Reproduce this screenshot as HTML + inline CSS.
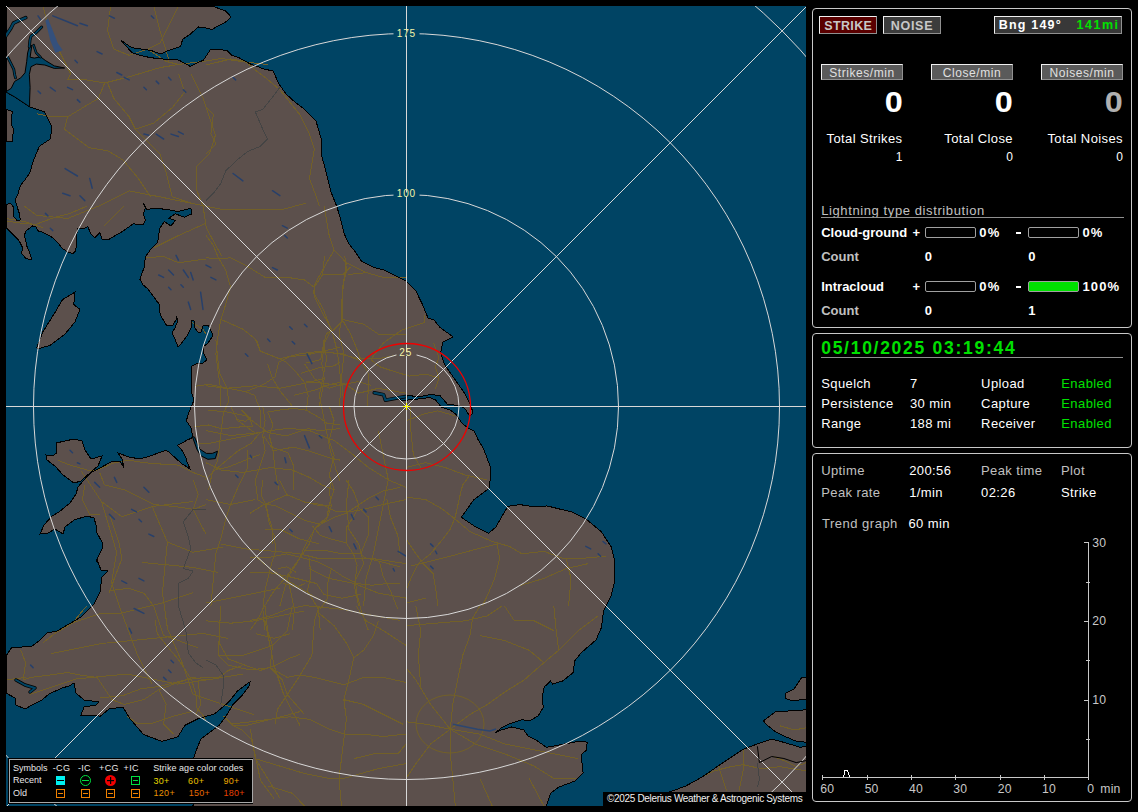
<!DOCTYPE html>
<html><head><meta charset="utf-8">
<style>
*{margin:0;padding:0;box-sizing:border-box}
html,body{width:1138px;height:812px;background:#000;overflow:hidden;font-family:"Liberation Sans",sans-serif;color:#fff}
#map{position:absolute;left:0;top:0;width:812px;height:812px}
.ab{position:absolute;white-space:nowrap}
.panel{position:absolute;left:812px;width:320px;border:1px solid #c8c8c8;border-radius:4px}
</style></head><body>
<svg id="map" width="812" height="812" viewBox="0 0 812 812">
<defs><clipPath id="mc"><rect x="6" y="6" width="800" height="800"/></clipPath></defs><g clip-path="url(#mc)">
<rect x="6" y="6" width="800" height="800" fill="#004464"/>
<polygon points="6.0,6.0 212.0,6.0 225.6,10.9 231.2,17.0 225.6,22.0 212.0,29.4 206.0,28.0 198.6,26.9 190.0,34.3 182.6,39.2 180.7,46.6 169.0,50.3 160.4,54.0 150.6,50.3 140.8,49.0 132.0,47.8 121.0,40.4 132.0,52.7 139.5,55.2 150.6,57.7 161.7,58.9 178.9,60.1 190.0,66.3 203.5,60.1 210.9,49.0 226.9,50.3 231.8,55.2 239.0,57.7 250.0,63.8 264.0,69.0 273.0,71.0 279.0,84.0 286.0,94.0 296.0,103.0 303.0,108.0 316.0,121.0 321.0,138.0 321.0,153.0 326.0,172.0 331.0,192.0 337.0,207.0 340.6,219.4 344.3,234.0 349.0,244.0 355.0,251.4 361.6,261.3 374.0,267.4 383.7,270.0 393.6,274.8 406.0,281.0 415.8,290.8 423.0,305.6 428.0,318.0 434.0,320.0 439.9,327.4 453.2,337.0 442.9,342.2 440.6,352.5 444.3,364.3 454.7,379.1 465.0,393.9 470.9,405.7 473.1,413.1 469.5,416.0 465.0,408.7 459.1,405.7 447.3,404.2 439.9,395.4 429.6,394.6 419.2,396.8 407.4,395.4 400.0,396.8 400.0,400.5 411.8,399.8 429.6,397.6 435.5,399.8 441.4,407.2 450.2,410.1 456.2,414.6 462.1,423.4 468.0,427.9 473.9,430.8 478.3,440.0 483.4,448.4 490.8,468.0 489.6,487.8 473.6,500.0 461.3,517.3 476.0,527.2 488.4,533.3 495.8,527.2 505.6,510.0 508.0,506.3 520.0,504.6 534.8,507.0 547.0,505.9 571.7,512.0 586.5,519.4 601.3,531.7 611.0,546.5 614.8,561.3 614.8,581.0 611.0,595.8 603.7,610.5 601.3,627.8 596.0,640.0 581.6,652.4 575.0,660.4 573.0,672.7 562.7,681.0 552.5,684.0 550.4,681.0 544.3,687.0 542.2,697.3 543.3,707.5 538.2,715.7 530.0,720.8 521.8,719.8 509.5,723.8 501.3,728.0 495.2,733.0 501.3,730.0 511.6,727.0 523.8,730.0 528.0,736.0 536.0,740.0 542.2,744.3 546.3,747.4 562.7,744.3 579.0,741.2 587.2,742.2 586.2,750.4 581.1,754.5 583.1,773.0 575.0,781.0 558.6,787.2 550.4,793.4 546.3,806.0 193.0,806.0 193.9,757.5 196.2,750.6 200.8,739.1 219.1,725.4 226.0,716.2 232.9,704.8 242.0,695.6 248.9,686.4 250.0,682.0 246.6,684.1 237.5,691.0 228.3,702.5 214.5,713.9 198.5,718.5 184.8,725.4 177.9,736.8 161.9,741.4 143.5,734.5 129.8,718.5 122.9,707.0 109.0,709.0 100.0,716.5 96.0,715.0 81.0,715.0 84.0,707.0 96.0,705.0 99.0,702.0 84.0,700.0 76.0,693.0 74.0,683.0 69.0,686.0 62.0,688.0 49.0,694.0 42.0,700.0 32.0,705.0 25.0,709.0 16.0,705.0 15.0,698.0 6.0,693.0 6.0,656.0 12.0,647.0 22.0,647.0 32.0,646.0 39.0,641.0 47.0,633.0 57.0,631.0 69.0,624.0 81.0,617.0 94.0,604.0 100.0,592.0 102.0,577.0 108.0,571.0 101.0,570.0 97.0,560.0 96.0,562.0 98.0,557.0 102.0,549.0 103.0,544.0 96.0,531.0 96.0,525.0 94.0,518.0 87.0,516.0 74.0,520.0 65.0,527.0 63.0,534.0 55.0,529.0 48.0,533.0 40.0,534.0 44.0,525.0 52.0,516.0 59.0,512.0 70.0,503.0 76.0,494.0 78.0,487.0 83.0,481.0 92.0,472.0 100.0,468.0 111.0,462.0 120.0,461.0 124.0,468.0 122.0,459.0 118.0,453.0 129.0,457.0 140.0,459.0 150.0,456.0 165.0,450.5 168.0,451.2 176.1,458.6 182.0,463.8 190.1,469.0 187.2,462.3 185.7,457.1 182.7,451.2 177.6,445.3 187.2,440.1 193.1,437.2 192.3,434.2 190.9,427.6 186.4,420.9 187.9,415.0 194.0,400.0 192.0,394.0 191.0,386.0 191.0,374.0 192.0,366.0 196.0,364.0 203.0,363.0 207.0,360.0 204.0,354.0 203.0,347.0 208.0,343.0 212.0,337.0 212.0,333.0 208.0,325.0 203.0,326.0 201.0,332.0 198.0,332.0 194.0,327.0 194.0,321.0 192.0,320.0 191.0,328.0 187.0,336.0 181.0,344.0 178.0,347.0 175.0,339.0 172.0,333.0 175.0,328.0 178.0,320.0 176.0,316.0 176.0,320.0 173.0,325.0 167.0,326.0 162.0,318.0 159.0,311.0 159.0,304.0 156.0,300.0 148.0,289.0 143.2,285.0 139.9,279.2 144.3,267.0 145.4,257.0 149.9,250.4 157.6,242.6 159.8,228.2 164.3,221.6 170.9,226.0 175.3,220.5 168.7,218.3 175.3,213.8 184.2,217.2 192.0,213.8 190.9,208.3 177.6,211.6 166.5,209.4 155.4,208.3 146.5,209.4 143.2,202.8 145.4,208.3 143.2,213.8 145.4,220.5 143.2,224.9 133.2,223.8 122.2,231.6 108.9,239.3 102.2,239.3 100.0,232.7 94.7,237.6 90.3,233.2 88.0,226.6 83.6,228.8 77.0,228.8 77.0,233.2 76.4,242.0 75.8,251.0 72.5,253.7 68.0,252.0 62.5,248.7 58.1,243.2 52.6,237.6 42.6,232.1 38.2,231.0 35.9,226.6 32.6,226.0 26.0,231.0 24.3,235.4 27.0,246.5 29.8,253.2 32.0,259.8 26.0,258.7 21.5,253.2 22.6,247.6 19.3,241.0 12.7,234.3 6.0,227.7 6.0,204.4 10.4,203.3 13.2,206.6 13.8,216.6 17.1,220.5 20.4,219.9 19.3,213.3 16.0,203.3 14.9,200.0 18.2,193.3 20.4,185.5 24.8,180.0 29.6,173.4 33.3,161.0 39.4,146.2 50.5,138.9 51.7,126.5 44.4,111.7 29.6,106.8 14.8,97.0 6.0,92.0" fill="#5c504c"/>
<polygon points="36.8,347.6 43.0,331.6 55.3,311.9 62.6,299.6 75.0,292.2 73.7,304.5 79.9,309.4 75.0,321.8 65.1,334.0 55.3,341.5 50.3,345.2 38.0,348.9" fill="#5c504c"/>
<polygon points="6.0,109.0 12.3,111.7 11.0,124.0 13.5,129.0 12.3,141.0 6.0,141.0" fill="#5c504c"/>
<polygon points="669.5,792.0 685.8,786.0 702.2,777.0 718.5,765.7 743.0,749.3 759.4,743.2 771.7,739.0 779.8,741.2 790.0,744.2 800.3,747.3 806.0,746.3 806.0,806.0 669.5,806.0" fill="#5c504c"/>
<polygon points="763.5,720.7 775.8,711.5 800.3,710.5 806.0,709.5 806.0,742.2 796.2,741.2 784.0,736.0 775.8,732.0 765.5,723.8" fill="#5c504c"/>
<polygon points="786.0,693.0 794.0,689.0 802.0,677.0 806.0,677.0 806.0,699.0 792.0,701.0 785.0,698.0" fill="#5c504c"/>
<polygon points="56.0,443.0 74.0,439.0 82.0,441.0 85.0,450.0 91.0,459.0 102.0,456.0 98.0,466.0 91.0,472.0 81.0,481.0 74.0,483.0 63.0,475.0 55.0,466.0 47.0,460.0 46.0,455.0 52.0,456.0 57.0,453.0" fill="#5c504c"/>
<g fill="none" stroke="#726028" stroke-width="1" stroke-linejoin="round" shape-rendering="crispEdges"><polyline points="67.6,79.9 86.1,79.9 104.6,83.0 129.2,76.8 160.0,67.6 178.5,64.5 203.1,61.4 221.6,58.4 240.1,61.4 267.8,64.5"/><polyline points="43.0,6.0 49.1,30.6 61.4,55.3 70.7,73.8 67.6,79.9"/><polyline points="110.7,6.0 107.6,30.6 113.8,49.1 129.2,55.3 147.7,49.1 160.0,43.0 178.5,6.0"/><polyline points="153.8,6.0 160.0,30.6 169.2,61.4"/><polyline points="104.6,83.0 98.4,98.4 83.0,107.6 67.6,116.9 52.2,116.9"/><polyline points="67.6,116.9 64.5,129.2 76.8,138.4 89.2,147.7 107.6,150.7 123.0,160.0 138.4,178.5 150.7,196.9"/><polyline points="107.6,83.0 113.8,98.4 129.2,116.9 135.4,129.2 160.0,153.8 166.1,172.3 172.3,196.9 190.8,203.1"/><polyline points="178.5,73.8 184.6,92.2 172.3,107.6 153.8,123.0 135.4,129.2"/><polyline points="190.8,73.8 203.1,98.4 209.3,116.9 215.4,135.4 209.3,153.8 196.9,166.1 196.9,190.8 203.1,206.2"/><polyline points="36.8,113.8 52.2,116.9"/><polyline points="24.5,206.2 36.8,215.4 67.6,218.5 98.4,206.2 129.2,190.8 160.0,196.9 190.8,203.1 221.6,209.3 252.4,209.3 283.2,209.3 306.0,203.1"/><polyline points="203.1,206.2 206.2,227.7 221.6,256.1"/><polyline points="6.0,218.5 24.5,221.6 43.0,227.7"/><polyline points="147.7,49.1 166.1,61.4 178.5,64.5"/><polyline points="206.0,65.1 230.6,59.0 245.4,61.4 255.3,70.0 265.1,77.4 279.9,89.7 299.6,114.4 309.4,134.1 314.4,148.9 311.9,163.6 309.4,178.4 316.8,198.1 319.3,206.0"/><polyline points="206.0,107.0 213.4,114.4 210.9,134.1 215.9,143.9 206.0,153.8"/><polyline points="6.0,220.8 20.8,223.2 35.6,224.5 55.3,217.1 70.0,213.4 87.3,206.0"/><polyline points="104.5,225.7 114.4,215.9 124.2,206.0"/><polyline points="146.4,257.7 163.6,256.5 178.4,262.7 206.0,259.0"/><polyline points="153.8,247.9 178.4,235.6 206.0,223.2"/><polyline points="190.7,321.8 203.0,329.2 206.0,334.1"/><polyline points="324.2,206.0 326.7,220.8 329.2,235.6 334.1,250.3 326.7,262.7 314.4,284.8 314.4,297.1 321.8,311.9 331.6,329.2 324.2,343.9 321.8,363.6 324.2,378.4 321.8,393.2 319.3,406.0"/><polyline points="334.1,250.3 346.4,262.7 343.9,279.9 341.5,304.5 341.5,319.3 339.0,334.1 343.9,353.8 341.5,378.4 343.9,406.0"/><polyline points="206.0,257.7 218.3,259.0 230.6,257.7 245.4,265.1 265.1,277.4 287.3,277.4 304.5,279.9 314.4,287.3"/><polyline points="206.0,235.6 213.4,245.4 218.3,257.7 225.7,270.0 230.6,287.3 225.7,304.5 220.8,319.3 218.3,334.1 215.9,353.8 218.3,373.5 220.8,390.7 220.8,406.0"/><polyline points="220.8,319.3 242.9,329.2 255.3,339.0 260.2,351.3 279.9,358.7 299.6,353.8 319.3,351.3 339.0,353.8 358.7,358.7 378.4,358.7 403.0,353.8"/><polyline points="267.6,363.6 272.5,378.4 279.9,390.7 292.2,406.0"/><polyline points="206.0,385.8 225.7,388.3 255.3,385.8 279.9,388.3 304.5,383.3 324.2,378.4"/><polyline points="346.4,262.7 366.1,272.5 383.3,277.4 406.0,277.4"/><polyline points="341.5,319.3 363.6,324.2 378.4,334.1 406.0,334.1"/><polyline points="304.5,363.6 314.4,378.4 329.2,388.3 343.9,383.3 358.7,393.2 378.4,388.3 406.0,393.2"/><polyline points="206.0,430.6 230.6,435.6 255.3,433.1 270.0,430.6 289.7,428.2 309.4,430.6 334.1,440.5 353.8,455.3 368.6,467.6 388.3,479.9 406.0,487.3"/><polyline points="262.7,406.0 265.1,420.8 262.7,435.6 265.1,450.3 255.3,479.9 257.7,499.6 265.1,504.5 272.5,529.2 272.5,543.9"/><polyline points="230.6,406.0 238.0,420.8 255.3,433.1"/><polyline points="206.0,462.7 220.8,470.0 242.9,472.5 270.0,467.6 292.2,470.0 309.4,477.4 321.8,484.8 334.1,489.7"/><polyline points="247.9,450.3 247.9,467.6 238.0,487.3 230.6,504.5 225.7,519.3 220.8,539.0 215.9,553.8 213.4,578.4 210.9,606.0"/><polyline points="265.1,504.5 287.3,494.7 304.5,502.1 321.8,504.5 336.5,511.9 348.9,511.9 363.6,509.4 383.3,504.5 406.0,499.6"/><polyline points="329.2,406.0 334.1,420.8 329.2,440.5 334.1,455.3 329.2,475.0 334.1,489.7 329.2,504.5 326.7,519.3 314.4,529.2 309.4,543.9 299.6,558.7 287.3,578.4 279.9,606.0"/><polyline points="348.9,479.9 346.4,504.5 348.9,529.2 358.7,543.9 363.6,563.6 353.8,583.3 358.7,606.0"/><polyline points="220.8,543.9 245.4,548.9 275.0,551.3 299.6,553.8 319.3,558.7 343.9,558.7 373.5,558.7 406.0,563.6"/><polyline points="255.3,556.2 270.0,568.6 292.2,583.3 316.8,598.1 334.1,606.0"/><polyline points="309.4,568.6 329.2,578.4 353.8,583.3 378.4,593.2 406.0,598.1"/><polyline points="378.4,430.6 383.3,455.3 388.3,479.9 383.3,504.5 378.4,529.2 373.5,553.8 366.1,578.4 363.6,606.0"/><polyline points="206.0,603.0 230.6,598.1 255.3,593.2 279.9,588.3"/><polyline points="265.1,529.2 279.9,529.2 299.6,539.0 319.3,543.9"/><polyline points="206.0,499.6 230.6,504.5 255.3,499.6"/><polyline points="57.7,460.2 70.0,465.1 87.3,470.0 97.1,470.0"/><polyline points="97.1,470.0 114.4,462.7 129.2,460.2 143.9,462.7 158.7,463.9 178.4,465.1 193.2,472.5 206.0,477.4"/><polyline points="99.6,472.5 104.5,484.8 124.2,489.7 139.0,497.1 153.8,504.5 178.4,507.0 193.2,509.4 206.0,504.5"/><polyline points="84.8,484.8 82.4,499.6 89.7,514.4 99.6,514.4"/><polyline points="109.4,514.4 114.4,529.2 119.3,543.9 121.8,558.7 114.4,578.4 109.4,593.2"/><polyline points="109.4,590.7 129.2,588.3 143.9,593.2 153.8,606.0"/><polyline points="193.2,479.9 198.1,494.7 193.2,509.4 200.6,524.2 206.0,534.1"/><polyline points="20.8,650.3 25.7,662.7 23.2,679.9 30.6,677.4 50.3,675.0 67.6,672.5 79.9,675.0 97.1,677.4 107.0,692.2 111.9,699.6 124.2,704.5 143.9,699.6 158.7,689.7 178.4,682.4 193.2,677.4 206.0,679.9"/><polyline points="6.0,679.9 25.7,677.4"/><polyline points="42.9,642.9 55.3,633.1 72.5,623.2 82.4,610.9 87.3,606.0"/><polyline points="153.8,606.0 158.7,620.8 163.6,635.6 178.4,640.5 198.1,647.9"/><polyline points="158.7,689.7 166.1,704.5 163.6,724.2 173.5,734.1"/><polyline points="198.1,679.9 200.6,704.5 195.7,714.4 206.0,719.3"/><polyline points="220.8,606.0 219.5,630.6 218.3,655.3 228.2,665.1 250.3,670.0 270.0,667.6 287.3,677.4 299.6,675.0 314.4,677.4 343.9,684.8 363.6,677.4 383.3,677.4 406.0,682.4"/><polyline points="265.1,606.0 267.6,630.6 272.5,645.4 270.0,667.6 282.4,679.9 287.3,694.7 304.5,714.4"/><polyline points="319.3,606.0 314.4,620.8 311.9,655.3 297.1,679.9 287.3,694.7 277.4,709.4 275.0,724.2"/><polyline points="319.3,613.4 334.1,625.7 346.4,642.9 353.8,657.7 348.9,679.9 343.9,699.6 346.4,719.3 343.9,739.0 341.5,758.7 339.0,778.4 341.5,806.0"/><polyline points="378.4,620.8 373.5,635.6 363.6,650.3 353.8,657.7"/><polyline points="230.6,724.2 250.3,721.8 270.0,719.3 289.7,716.8 309.4,719.3 329.2,729.2 343.9,734.1 363.6,734.1 383.3,736.5 406.0,734.1"/><polyline points="250.3,729.2 252.8,743.9 255.3,758.7 267.6,778.4 279.9,798.1"/><polyline points="292.2,606.0 287.3,630.6 272.5,645.4 242.9,655.3 218.3,655.3"/><polyline points="206.0,620.8 230.6,623.2 255.3,620.8 279.9,615.9 304.5,610.9"/><polyline points="255.3,758.7 279.9,766.1 304.5,773.5 329.2,778.4 343.9,778.4 378.4,768.6 406.0,763.6"/><polyline points="356.2,606.0 366.1,620.8 383.3,630.6 406.0,645.4"/><polyline points="343.9,699.6 363.6,704.5 383.3,714.4 403.0,724.2"/><polyline points="353.8,758.7 373.5,753.8 398.1,753.8 406.0,743.9"/><polyline points="267.6,785.8 292.2,793.2 304.5,806.0"/><polyline points="406.0,420.8 425.7,413.4 438.0,410.9 455.3,415.9"/><polyline points="410.9,406.0 410.9,430.6 413.4,455.3 420.8,467.6"/><polyline points="406.0,467.6 425.7,462.7 445.4,467.6 465.1,475.0 487.3,479.9"/><polyline points="470.0,475.0 462.7,484.8 460.2,494.7 455.3,516.8 450.3,529.2 442.9,539.0 430.6,553.8 418.3,563.6 410.9,578.4 406.0,590.7"/><polyline points="406.0,497.1 425.7,499.6 442.9,509.4 455.3,519.3 470.0,531.6 492.2,541.5 509.4,546.4 521.8,553.8 543.9,551.3 563.6,558.7 578.4,558.7 606.0,556.2"/><polyline points="406.0,539.0 415.9,553.8 423.2,563.6 433.1,573.5 435.6,588.3 438.0,606.0"/><polyline points="410.9,566.1 430.6,561.2 450.3,556.2 477.4,548.9 497.1,543.9"/><polyline points="497.1,543.9 499.6,558.7 494.7,578.4 487.3,595.7 482.4,606.0"/><polyline points="566.1,558.7 571.0,578.4 568.6,606.0"/><polyline points="519.3,585.8 543.9,578.4 566.1,568.6 588.3,563.6"/><polyline points="406.0,603.0 425.7,598.1"/><polyline points="450.3,729.2 452.8,704.5 457.7,679.9 462.7,655.3 470.0,635.6 472.5,618.3 479.9,606.0"/><polyline points="450.3,729.2 470.0,714.4 487.3,704.5 504.5,692.2 524.2,679.9 543.9,662.7 558.7,650.3 578.4,630.6 598.1,615.9"/><polyline points="450.3,729.2 479.9,734.1 504.5,743.9 529.2,748.9 553.8,753.8 578.4,758.7"/><polyline points="450.3,729.2 475.0,743.9 504.5,753.8 534.1,766.1 553.8,778.4 576.0,778.4"/><polyline points="450.3,729.2 450.3,753.8 452.8,778.4 455.3,806.0"/><polyline points="450.3,729.2 430.6,743.9 415.9,763.6 406.0,778.4"/><polyline points="450.3,729.2 425.7,724.2 406.0,721.8"/><polyline points="450.3,729.2 430.6,704.5 415.9,679.9 406.0,667.6"/><polyline points="406.0,625.7 435.6,623.2 465.1,620.8 487.3,615.9 502.1,606.0"/><polyline points="479.9,635.6 504.5,640.5 529.2,650.3 543.9,662.7"/><polyline points="415.9,606.0 420.8,630.6 418.3,655.3 420.8,687.3"/><polyline points="553.8,606.0 556.2,630.6 558.7,650.3"/><polyline points="504.5,606.0 514.4,620.8 534.1,620.8 553.8,630.6"/><polyline points="479.9,778.4 492.2,806.0"/><polyline points="529.2,778.4 543.9,806.0"/><polyline points="324.5,256.0 322.6,274.5 315.2,285.6 313.4,292.9 322.6,307.7 330.0,326.2 333.7,337.3 337.4,352.1 339.3,366.8 341.1,385.3 339.3,406.0"/><polyline points="344.8,256.0 346.6,270.8 342.9,285.6 342.9,304.0 342.9,320.7 350.3,333.6 355.9,346.5 361.4,361.3 368.8,374.2 368.8,385.3 367.0,406.0"/><polyline points="348.5,274.5 367.0,272.6"/><polyline points="322.6,274.5 342.9,274.5 350.3,267.1"/><polyline points="342.9,320.7 333.7,329.9 326.3,333.6 322.6,348.4 320.8,359.5 306.0,363.1"/><polyline points="370.7,359.5 383.6,342.8 402.1,329.9 424.2,322.5 424.2,315.1"/><polyline points="370.7,359.5 379.9,366.8 391.0,370.5 409.5,376.1 426.1,374.2 439.0,377.9 435.3,389.0"/><polyline points="433.5,342.8 439.0,357.6 435.3,366.8 439.0,377.9"/><polyline points="306.0,353.9 324.5,352.1 342.9,353.9 361.4,361.3"/><polyline points="306.0,381.6 324.5,383.5 339.3,385.3 357.7,381.6 370.7,385.3"/><polyline points="215.9,340.0 217.7,358.5 219.6,373.3 226.9,388.0 228.8,401.0 223.3,413.9 221.4,428.7 219.6,443.5 217.7,460.1 212.2,473.0 208.5,490.0"/><polyline points="195.5,386.2 208.5,384.3 226.9,388.0 245.4,391.7 263.9,384.3 275.0,376.9 278.7,362.2 289.8,356.6 308.2,354.8 323.0,351.1 340.0,347.4"/><polyline points="256.5,340.0 260.2,351.1 278.7,358.5 286.1,362.2 297.1,373.3 304.5,382.5 308.2,395.4 306.4,410.2 319.3,417.6 326.7,423.1 340.0,425.0"/><polyline points="208.5,410.2 226.9,412.0 245.4,415.7 260.2,426.8 267.6,432.4 286.1,436.1 308.2,428.7 319.3,430.5 340.0,428.7"/><polyline points="245.4,391.7 254.7,395.4 260.2,410.2 260.2,426.8"/><polyline points="267.6,412.0 273.1,425.0 269.4,436.1 273.1,450.8 275.0,469.3 278.7,490.0"/><polyline points="260.2,432.4 251.0,443.5 238.0,450.8 226.9,460.1 215.9,469.3 204.8,480.4"/><polyline points="260.2,432.4 245.4,436.1 226.9,439.8 208.5,443.5 197.4,443.5"/><polyline points="263.9,436.1 271.3,447.1 287.9,452.7 293.5,465.6 293.5,490.0"/><polyline points="193.7,426.8 208.5,425.0 221.4,428.7 241.7,426.8 252.8,426.8"/><polyline points="293.5,395.4 300.8,393.6 315.6,389.9 330.4,384.3 340.0,382.5"/><polyline points="323.0,340.0 326.7,358.5 323.0,376.9 319.3,395.4 323.0,413.9 326.7,432.4 330.4,450.8 335.9,469.3 340.0,480.4"/><polyline points="300.8,373.3 319.3,367.7 334.1,365.9 340.0,362.2"/><polyline points="215.9,469.3 226.9,467.5 245.4,460.1 260.2,454.5"/><polyline points="306.4,410.2 293.5,408.4 278.7,410.2 267.6,412.0"/><polyline points="273.1,450.8 293.5,447.1 308.2,450.8 330.4,458.2 340.0,460.1"/><polyline points="241.7,410.2 249.1,417.6 252.8,426.8"/><polyline points="236.2,419.4 245.4,421.3 251.0,417.6"/><polyline points="250.0,513.3 264.8,504.0 275.9,505.9 290.6,513.3 305.4,520.6 320.2,524.3 335.0,516.9 346.1,513.3 357.1,505.9 368.2,498.5 383.0,491.1 400.0,487.4"/><polyline points="262.9,480.0 261.1,494.8 266.6,505.9 268.5,520.6 274.0,535.4 275.9,550.2 272.2,561.3 268.5,576.1 264.8,590.8 262.9,609.3 264.8,630.0"/><polyline points="331.3,480.0 329.4,491.1 331.3,505.9 327.6,516.9 316.5,526.2 305.4,544.7 299.9,557.6 286.9,576.1"/><polyline points="346.1,480.0 353.5,491.1 359.0,505.9 353.5,516.9 346.1,528.0 346.1,542.8 353.5,553.9 357.1,565.0 355.3,579.8 357.1,594.5 360.8,609.3 368.2,630.0"/><polyline points="357.1,505.9 368.2,516.9 368.2,535.4 360.8,553.9 364.5,557.6 379.3,561.3 400.0,566.8"/><polyline points="250.0,557.6 268.5,557.6 286.9,553.9 301.7,557.6 316.5,561.3 331.3,568.7 342.4,576.1 357.1,583.5 371.9,585.3 386.7,583.5 400.0,583.5"/><polyline points="286.9,576.1 301.7,579.8 316.5,583.5 323.9,594.5 342.4,598.2 360.8,594.5"/><polyline points="286.9,576.1 290.6,590.8 294.3,609.3 292.5,630.0"/><polyline points="286.9,576.1 274.0,590.8 264.8,605.6 257.4,620.4 250.0,630.0"/><polyline points="286.9,576.1 268.5,572.4 250.0,572.4"/><polyline points="309.1,557.6 311.0,576.1 307.3,590.8 318.4,609.3 320.2,630.0"/><polyline points="331.3,568.7 327.6,583.5 327.6,598.2 320.2,609.3"/><polyline points="379.3,561.3 383.0,576.1 390.4,590.8 397.8,609.3"/><polyline points="250.0,620.4 268.5,616.7 286.9,609.3 305.4,605.6 323.9,607.5 342.4,609.3 360.8,613.0 379.3,616.7 400.0,620.4"/><polyline points="360.8,553.9 342.4,553.9 323.9,550.2 305.4,550.2"/><polyline points="279.6,480.0 286.9,494.8 305.4,502.2 320.2,505.9 331.3,505.9"/><polyline points="312.8,526.2 320.2,535.4 331.3,539.1 346.1,542.8"/><polyline points="386.7,498.5 390.4,516.9 397.8,535.4 400.0,553.9"/><polyline points="277.7,568.7 286.9,566.8 296.2,572.4"/><polyline points="283.3,583.5 296.2,587.1 305.4,583.5"/><polyline points="702.2,776.9 714.4,770.8 730.8,766.7 743.1,764.7 761.5,768.8 779.8,766.7 806.0,770.8"/><polyline points="743.1,750.4 743.1,770.8 739.0,791.2"/><polyline points="773.7,756.5 783.9,760.6 796.2,766.7 806.0,762.6"/><polyline points="718.5,765.7 722.6,779.0 726.7,791.2"/><polyline points="779.8,725.8 794.2,729.9 806.0,727.9"/><polyline points="155.0,620.0 157.3,633.7 166.4,645.2 177.9,658.9 191.6,679.6 196.2,695.6 196.2,707.1 205.4,718.5"/><polyline points="219.1,620.0 219.1,642.9 228.3,658.9 246.6,665.8 260.4,670.4 274.1,665.8 287.9,658.9 300.0,654.4"/><polyline points="100.0,697.9 122.9,695.6 141.2,688.7 159.6,686.4 187.1,679.6 205.4,677.3 219.1,677.3 228.3,670.4 242.0,665.8"/><polyline points="264.9,620.0 269.5,642.9 274.1,665.8 283.3,693.3 292.4,711.6 300.0,725.4"/><polyline points="223.7,716.2 232.9,725.4 242.0,730.0 251.2,739.1 255.8,757.5 260.4,780.4 274.1,798.7"/><polyline points="232.9,725.4 246.6,725.4 264.9,720.8 283.3,716.2 300.0,711.6"/><polyline points="127.5,716.2 136.7,723.1 152.7,723.1 173.3,716.2 191.6,711.6"/><polyline points="255.8,633.7 274.1,638.3 290.1,633.7"/><polyline points="81.2,471.0 101.5,501.5 121.8,516.7 152.2,506.5 192.8,501.5"/><polyline points="101.5,501.5 116.7,552.2 111.6,582.6 121.8,613.1 137.0,653.7 152.2,684.1"/><polyline points="121.8,613.1 162.4,602.9 192.8,592.8"/><polyline points="50.7,653.7 101.5,643.5 152.2,638.5 202.9,633.4 228.3,638.5"/><polyline points="30.4,694.3 76.1,679.0 126.8,674.0 177.6,684.1 213.1,679.0 243.5,674.0"/><polyline points="152.2,506.5 167.4,542.1 192.8,552.2 223.2,547.1"/><polyline points="167.4,542.1 162.4,592.8 167.4,628.3 182.6,663.8 192.8,694.3"/><polyline points="192.8,694.3 223.2,704.4 253.7,714.6"/><polyline points="71.0,623.2 101.5,613.1 121.8,613.1"/><polyline points="142.1,562.4 192.8,567.4 218.2,572.5"/></g>
<ellipse cx="450" cy="724" rx="34" ry="29" fill="none" stroke="#726028" stroke-width="1"/>
<g fill="none" stroke="#444444" stroke-width="1" shape-rendering="crispEdges"><polyline points="279.9,87.3 272.5,97.1 262.7,109.4 255.3,111.9 262.7,129.2 267.6,139.0 260.2,146.4 247.9,151.3 235.6,161.2 225.7,171.0 220.8,183.3 213.4,193.2 206.0,200.6"/><polyline points="206.0,509.4 193.2,509.4 183.3,521.8 188.3,536.5 190.7,548.9 183.3,568.6 193.2,571.0 188.3,578.4 178.4,583.3 178.4,606.0"/><polyline points="178.4,606.0 185.8,630.6 188.3,652.8 195.7,662.7 203.0,667.6"/><polyline points="206.0,660.2 215.9,665.1 223.2,675.0 223.2,687.3 220.8,704.5"/><polyline points="757.4,762.6 759.4,779.0 757.4,787.1"/></g>
<polygon points="6.0,6.0 212.0,6.0 225.6,10.9 231.2,17.0 225.6,22.0 212.0,29.4 206.0,28.0 198.6,26.9 190.0,34.3 182.6,39.2 180.7,46.6 169.0,50.3 160.4,54.0 150.6,50.3 140.8,49.0 132.0,47.8 121.0,40.4 132.0,52.7 139.5,55.2 150.6,57.7 161.7,58.9 178.9,60.1 190.0,66.3 203.5,60.1 210.9,49.0 226.9,50.3 231.8,55.2 239.0,57.7 250.0,63.8 264.0,69.0 273.0,71.0 279.0,84.0 286.0,94.0 296.0,103.0 303.0,108.0 316.0,121.0 321.0,138.0 321.0,153.0 326.0,172.0 331.0,192.0 337.0,207.0 340.6,219.4 344.3,234.0 349.0,244.0 355.0,251.4 361.6,261.3 374.0,267.4 383.7,270.0 393.6,274.8 406.0,281.0 415.8,290.8 423.0,305.6 428.0,318.0 434.0,320.0 439.9,327.4 453.2,337.0 442.9,342.2 440.6,352.5 444.3,364.3 454.7,379.1 465.0,393.9 470.9,405.7 473.1,413.1 469.5,416.0 465.0,408.7 459.1,405.7 447.3,404.2 439.9,395.4 429.6,394.6 419.2,396.8 407.4,395.4 400.0,396.8 400.0,400.5 411.8,399.8 429.6,397.6 435.5,399.8 441.4,407.2 450.2,410.1 456.2,414.6 462.1,423.4 468.0,427.9 473.9,430.8 478.3,440.0 483.4,448.4 490.8,468.0 489.6,487.8 473.6,500.0 461.3,517.3 476.0,527.2 488.4,533.3 495.8,527.2 505.6,510.0 508.0,506.3 520.0,504.6 534.8,507.0 547.0,505.9 571.7,512.0 586.5,519.4 601.3,531.7 611.0,546.5 614.8,561.3 614.8,581.0 611.0,595.8 603.7,610.5 601.3,627.8 596.0,640.0 581.6,652.4 575.0,660.4 573.0,672.7 562.7,681.0 552.5,684.0 550.4,681.0 544.3,687.0 542.2,697.3 543.3,707.5 538.2,715.7 530.0,720.8 521.8,719.8 509.5,723.8 501.3,728.0 495.2,733.0 501.3,730.0 511.6,727.0 523.8,730.0 528.0,736.0 536.0,740.0 542.2,744.3 546.3,747.4 562.7,744.3 579.0,741.2 587.2,742.2 586.2,750.4 581.1,754.5 583.1,773.0 575.0,781.0 558.6,787.2 550.4,793.4 546.3,806.0 193.0,806.0 193.9,757.5 196.2,750.6 200.8,739.1 219.1,725.4 226.0,716.2 232.9,704.8 242.0,695.6 248.9,686.4 250.0,682.0 246.6,684.1 237.5,691.0 228.3,702.5 214.5,713.9 198.5,718.5 184.8,725.4 177.9,736.8 161.9,741.4 143.5,734.5 129.8,718.5 122.9,707.0 109.0,709.0 100.0,716.5 96.0,715.0 81.0,715.0 84.0,707.0 96.0,705.0 99.0,702.0 84.0,700.0 76.0,693.0 74.0,683.0 69.0,686.0 62.0,688.0 49.0,694.0 42.0,700.0 32.0,705.0 25.0,709.0 16.0,705.0 15.0,698.0 6.0,693.0 6.0,656.0 12.0,647.0 22.0,647.0 32.0,646.0 39.0,641.0 47.0,633.0 57.0,631.0 69.0,624.0 81.0,617.0 94.0,604.0 100.0,592.0 102.0,577.0 108.0,571.0 101.0,570.0 97.0,560.0 96.0,562.0 98.0,557.0 102.0,549.0 103.0,544.0 96.0,531.0 96.0,525.0 94.0,518.0 87.0,516.0 74.0,520.0 65.0,527.0 63.0,534.0 55.0,529.0 48.0,533.0 40.0,534.0 44.0,525.0 52.0,516.0 59.0,512.0 70.0,503.0 76.0,494.0 78.0,487.0 83.0,481.0 92.0,472.0 100.0,468.0 111.0,462.0 120.0,461.0 124.0,468.0 122.0,459.0 118.0,453.0 129.0,457.0 140.0,459.0 150.0,456.0 165.0,450.5 168.0,451.2 176.1,458.6 182.0,463.8 190.1,469.0 187.2,462.3 185.7,457.1 182.7,451.2 177.6,445.3 187.2,440.1 193.1,437.2 192.3,434.2 190.9,427.6 186.4,420.9 187.9,415.0 194.0,400.0 192.0,394.0 191.0,386.0 191.0,374.0 192.0,366.0 196.0,364.0 203.0,363.0 207.0,360.0 204.0,354.0 203.0,347.0 208.0,343.0 212.0,337.0 212.0,333.0 208.0,325.0 203.0,326.0 201.0,332.0 198.0,332.0 194.0,327.0 194.0,321.0 192.0,320.0 191.0,328.0 187.0,336.0 181.0,344.0 178.0,347.0 175.0,339.0 172.0,333.0 175.0,328.0 178.0,320.0 176.0,316.0 176.0,320.0 173.0,325.0 167.0,326.0 162.0,318.0 159.0,311.0 159.0,304.0 156.0,300.0 148.0,289.0 143.2,285.0 139.9,279.2 144.3,267.0 145.4,257.0 149.9,250.4 157.6,242.6 159.8,228.2 164.3,221.6 170.9,226.0 175.3,220.5 168.7,218.3 175.3,213.8 184.2,217.2 192.0,213.8 190.9,208.3 177.6,211.6 166.5,209.4 155.4,208.3 146.5,209.4 143.2,202.8 145.4,208.3 143.2,213.8 145.4,220.5 143.2,224.9 133.2,223.8 122.2,231.6 108.9,239.3 102.2,239.3 100.0,232.7 94.7,237.6 90.3,233.2 88.0,226.6 83.6,228.8 77.0,228.8 77.0,233.2 76.4,242.0 75.8,251.0 72.5,253.7 68.0,252.0 62.5,248.7 58.1,243.2 52.6,237.6 42.6,232.1 38.2,231.0 35.9,226.6 32.6,226.0 26.0,231.0 24.3,235.4 27.0,246.5 29.8,253.2 32.0,259.8 26.0,258.7 21.5,253.2 22.6,247.6 19.3,241.0 12.7,234.3 6.0,227.7 6.0,204.4 10.4,203.3 13.2,206.6 13.8,216.6 17.1,220.5 20.4,219.9 19.3,213.3 16.0,203.3 14.9,200.0 18.2,193.3 20.4,185.5 24.8,180.0 29.6,173.4 33.3,161.0 39.4,146.2 50.5,138.9 51.7,126.5 44.4,111.7 29.6,106.8 14.8,97.0 6.0,92.0" fill="none" stroke="#000" stroke-width="1" shape-rendering="crispEdges"/>
<polygon points="36.8,347.6 43.0,331.6 55.3,311.9 62.6,299.6 75.0,292.2 73.7,304.5 79.9,309.4 75.0,321.8 65.1,334.0 55.3,341.5 50.3,345.2 38.0,348.9" fill="none" stroke="#000" stroke-width="1" shape-rendering="crispEdges"/>
<polygon points="6.0,109.0 12.3,111.7 11.0,124.0 13.5,129.0 12.3,141.0 6.0,141.0" fill="none" stroke="#000" stroke-width="1" shape-rendering="crispEdges"/>
<polygon points="669.5,792.0 685.8,786.0 702.2,777.0 718.5,765.7 743.0,749.3 759.4,743.2 771.7,739.0 779.8,741.2 790.0,744.2 800.3,747.3 806.0,746.3 806.0,806.0 669.5,806.0" fill="none" stroke="#000" stroke-width="1" shape-rendering="crispEdges"/>
<polygon points="763.5,720.7 775.8,711.5 800.3,710.5 806.0,709.5 806.0,742.2 796.2,741.2 784.0,736.0 775.8,732.0 765.5,723.8" fill="none" stroke="#000" stroke-width="1" shape-rendering="crispEdges"/>
<polygon points="786.0,693.0 794.0,689.0 802.0,677.0 806.0,677.0 806.0,699.0 792.0,701.0 785.0,698.0" fill="none" stroke="#000" stroke-width="1" shape-rendering="crispEdges"/>
<polygon points="56.0,443.0 74.0,439.0 82.0,441.0 85.0,450.0 91.0,459.0 102.0,456.0 98.0,466.0 91.0,472.0 81.0,481.0 74.0,483.0 63.0,475.0 55.0,466.0 47.0,460.0 46.0,455.0 52.0,456.0 57.0,453.0" fill="none" stroke="#000" stroke-width="1" shape-rendering="crispEdges"/>
<polygon points="192.3,436.4 196.8,449.0 200.5,455.6 207.9,459.3 215.3,458.6 217.5,451.2 212.3,453.4 206.4,453.4 199.7,449.0 194.6,437.2" fill="#004464" stroke="#000" stroke-width="1"/>
<polygon points="6.0,91.7 11.2,88.3 14.6,81.4 20.7,77.9 25.0,72.8 26.7,61.6 27.6,52.9 29.3,46.9 31.9,45.2 31.0,51.2 30.1,57.2 34.4,58.1 40.5,56.8 45.7,60.7 54.3,65.9 64.6,68.0 54.3,68.4 44.8,65.0 36.2,64.1 31.0,66.7 29.3,74.5 30.1,87.4 29.6,100.0 29.6,106.8 14.8,97.0 6.0,92.0" fill="#004464" stroke="#000" stroke-width="1"/>
<polyline points="6.0,35.6 10.9,28.2 13.4,23.2 18.3,20.8 25.7,17.7" fill="none" stroke="#000" stroke-width="3.6" stroke-linecap="round" stroke-linejoin="round"/>
<polyline points="29.3,46.9 30.0,40.0 31.0,36.0 35.6,33.1 41.7,27.0" fill="none" stroke="#000" stroke-width="3.0" stroke-linecap="round" stroke-linejoin="round"/>
<polyline points="33.6,45.2 36.2,52.9 40.5,57.2" fill="none" stroke="#000" stroke-width="2.5999999999999996" stroke-linecap="round" stroke-linejoin="round"/>
<polyline points="7.7,57.2 11.2,64.1 13.8,69.3 14.6,74.5 15.5,77.9" fill="none" stroke="#000" stroke-width="2.8" stroke-linecap="round" stroke-linejoin="round"/>
<polyline points="374.3,392.8 383.6,394.7 385.4,400.2 394.7,398.4 400.2,397.4 405.7,396.5" fill="none" stroke="#000" stroke-width="3.6" stroke-linecap="round" stroke-linejoin="round"/>
<polyline points="16.0,680.0 25.0,685.0 35.0,688.0 30.0,692.0" fill="none" stroke="#000" stroke-width="3.4" stroke-linecap="round" stroke-linejoin="round"/>
<polyline points="6.0,35.6 10.9,28.2 13.4,23.2 18.3,20.8 25.7,17.7" fill="none" stroke="#004464" stroke-width="2.2" stroke-linecap="round" stroke-linejoin="round"/>
<polyline points="29.3,46.9 30.0,40.0 31.0,36.0 35.6,33.1 41.7,27.0" fill="none" stroke="#004464" stroke-width="1.6" stroke-linecap="round" stroke-linejoin="round"/>
<polyline points="33.6,45.2 36.2,52.9 40.5,57.2" fill="none" stroke="#004464" stroke-width="1.2" stroke-linecap="round" stroke-linejoin="round"/>
<polyline points="7.7,57.2 11.2,64.1 13.8,69.3 14.6,74.5 15.5,77.9" fill="none" stroke="#004464" stroke-width="1.4" stroke-linecap="round" stroke-linejoin="round"/>
<polyline points="374.3,392.8 383.6,394.7 385.4,400.2 394.7,398.4 400.2,397.4 405.7,396.5" fill="none" stroke="#004464" stroke-width="2.2" stroke-linecap="round" stroke-linejoin="round"/>
<polyline points="16.0,680.0 25.0,685.0 35.0,688.0 30.0,692.0" fill="none" stroke="#004464" stroke-width="2" stroke-linecap="round" stroke-linejoin="round"/>
<polyline points="452.8,724.2 465.1,726.7 477.4,729.2 490.0,731.0 496.0,729.0" fill="none" stroke="#2c4670" stroke-width="1.6"/>
<polygon points="45.4,20.8 50.3,40.5 55.3,52.8 62.7,50.3 57.7,43.0 52.8,30.6 47.9,18.3" fill="#34507c"/>
<g fill="none" stroke="#28406a" stroke-width="1.5" stroke-linecap="round"><polyline points="38.0,15.9 40.5,19.5"/><polyline points="52.8,15.9 65.1,20.8 77.4,25.7"/><polyline points="79.9,23.2 87.3,25.7"/><polyline points="97.1,51.6 102.1,54.0"/><polyline points="75.0,60.2 77.4,62.7"/><polyline points="67.6,87.3 72.5,89.7"/><polyline points="50.3,87.3 55.3,91.0"/><polyline points="38.0,91.0 40.5,93.4"/><polyline points="77.4,99.6 79.9,102.1"/><polyline points="116.8,72.5 121.8,75.0"/><polyline points="124.2,77.4 129.2,79.9"/><polyline points="143.9,87.3 146.4,89.7"/><polyline points="156.2,81.1 158.7,83.6"/><polyline points="168.6,77.4 171.0,79.9"/><polyline points="183.3,89.7 185.8,92.2"/><polyline points="143.9,134.1 148.9,135.3"/><polyline points="156.2,134.1 163.6,139.0"/><polyline points="171.0,134.1 178.4,136.5"/><polyline points="178.4,131.6 183.3,134.1"/><polyline points="65.1,168.6 77.4,176.0"/><polyline points="89.7,178.4 92.2,188.3"/><polyline points="79.9,195.7 84.8,200.6"/><polyline points="62.7,193.2 70.0,195.7"/><polyline points="109.4,15.9 114.4,18.3"/><polyline points="151.3,15.9 153.8,18.3"/><polyline points="45.4,213.4 47.9,215.9"/><polyline points="50.3,228.2 52.8,230.6"/><polyline points="176.0,255.3 178.4,260.2"/><polyline points="168.6,270.0 173.5,275.0"/><polyline points="183.3,270.0 188.3,277.4"/><polyline points="190.7,272.5 193.2,279.9"/><polyline points="158.7,275.0 163.6,277.4"/><polyline points="168.6,287.3 171.0,289.7"/><polyline points="188.3,302.1 190.7,309.4"/><polyline points="200.6,292.2 203.0,309.4"/><polyline points="180.9,284.8 183.3,287.3"/><polyline points="70.0,450.3 72.5,452.8"/><polyline points="77.4,462.7 79.9,463.9"/><polyline points="94.7,482.4 99.6,487.3"/><polyline points="114.4,477.4 116.8,482.4"/><polyline points="143.9,487.3 148.9,492.2"/><polyline points="131.6,509.4 136.5,511.9"/><polyline points="139.0,519.3 141.5,521.8"/><polyline points="148.9,534.1 153.8,536.5"/><polyline points="109.4,514.4 114.4,519.3"/><polyline points="121.8,580.9 126.7,583.3"/><polyline points="139.0,578.4 143.9,580.9"/><polyline points="134.1,608.5 143.9,613.4"/><polyline points="129.2,628.2 131.6,633.1"/><polyline points="30.6,665.1 33.1,667.6"/><polyline points="163.6,677.4 166.1,679.9"/><polyline points="168.6,670.0 171.0,672.5"/><polyline points="171.0,660.2 173.5,662.7"/><polyline points="282.4,225.7 287.3,228.2"/><polyline points="284.8,235.6 287.3,238.0"/><polyline points="272.5,267.6 277.4,270.0"/><polyline points="245.4,353.8 247.9,356.2"/><polyline points="289.7,326.7 292.2,329.2"/><polyline points="304.5,324.2 307.0,326.7"/><polyline points="267.6,339.0 270.0,341.5"/><polyline points="292.2,341.5 294.7,343.9"/><polyline points="307.0,353.8 311.9,363.6"/><polyline points="206.0,265.1 210.9,267.6"/><polyline points="210.9,277.4 215.9,279.9"/><polyline points="233.1,173.5 242.9,180.9"/><polyline points="272.5,190.7 279.9,195.7"/><polyline points="233.1,77.4 235.6,79.9"/><polyline points="304.5,435.6 309.4,447.9"/><polyline points="319.3,435.6 321.8,438.0"/><polyline points="284.8,457.7 286.0,462.7"/><polyline points="275.0,482.4 277.4,484.8"/><polyline points="289.7,529.2 292.2,531.6"/><polyline points="329.2,526.7 331.6,531.6"/><polyline points="351.3,514.4 353.8,519.3"/><polyline points="353.8,543.9 356.2,548.9"/><polyline points="398.1,551.3 406.0,556.2"/><polyline points="235.6,475.0 238.0,477.4"/><polyline points="250.3,455.3 251.6,457.7"/><polyline points="393.2,568.6 394.4,571.0"/><polyline points="376.0,497.1 378.4,499.6"/><polyline points="363.6,509.4 366.1,511.9"/><polyline points="430.6,543.9 433.1,546.4"/><polyline points="435.6,551.3 436.8,553.8"/><polyline points="430.6,566.1 433.1,568.6"/><polyline points="585.8,546.4 590.7,548.9"/><polyline points="598.1,553.8 600.6,556.2"/><polyline points="603.0,541.5 606.0,543.9"/></g>
<g fill="none" stroke="#d8d8d8" stroke-width="1">
<circle cx="406.5" cy="406.5" r="52.5"/>
<circle cx="406.5" cy="406.5" r="212"/>
<circle cx="406.5" cy="406.5" r="373"/>
<circle cx="406.5" cy="406.5" r="531.2"/>
</g>
<g stroke="#d8d8d8" stroke-width="1" shape-rendering="crispEdges"><line x1="6" y1="406.5" x2="806" y2="406.5"/><line x1="406.5" y1="6" x2="406.5" y2="806"/></g>
<g stroke="#d8d8d8" stroke-width="1"><line x1="6" y1="6" x2="806" y2="806"/><line x1="807" y1="6" x2="7" y2="806"/></g>
<circle cx="407" cy="407" r="63.5" fill="none" stroke="#f00000" stroke-width="1.3"/>
<polyline points="757.4,746.3 759.4,762.6 771.7,756.5 783.9,758.5 796.2,762.6 806.0,760.6" fill="none" stroke="#000" stroke-width="1"/>
<rect x="396.5" y="352.0" width="20" height="4" fill="#5c504c"/>
<rect x="393.5" y="192.5" width="26" height="4" fill="#004464"/>
<rect x="393.5" y="31.5" width="26" height="4" fill="#004464"/>
</g>
</svg>
<div class="ab" style="left:396.7px;top:28.5px;font-size:10px;line-height:10px;color:#f4f4a8;letter-spacing:0.9px">175</div><div class="ab" style="left:396.7px;top:188.8px;font-size:10px;line-height:10px;color:#f4f4a8;letter-spacing:0.9px">100</div><div class="ab" style="left:399.3px;top:348.0px;font-size:10px;line-height:10px;color:#f4f4a8;letter-spacing:0.9px">25</div><div class="ab" style="left:403px;top:406px;width:7px;height:1px;background:#ffff00"></div><div class="ab" style="left:406px;top:403px;width:1px;height:7px;background:#ffff00"></div>
<div class="panel" style="top:8px;height:320px"></div>
<div class="panel" style="top:333px;height:115px"></div>
<div class="panel" style="top:453px;height:349px"></div>
<div class="ab" style="left:819px;top:16px;width:58px;height:18px;background:#5a0000;border:1px solid;border-color:#f0f0f0 #909090 #909090 #f0f0f0"></div>
<div class="ab" style="top:20.02px;font-size:12.5px;line-height:12.5px;font-weight:bold;color:#c8c8c8;letter-spacing:0.38px;left:824.2px;">STRIKE</div>
<div class="ab" style="left:883px;top:16px;width:58px;height:18px;background:#3c3c3c;border:1px solid;border-color:#f0f0f0 #909090 #909090 #f0f0f0"></div>
<div class="ab" style="top:20.02px;font-size:12.5px;line-height:12.5px;font-weight:bold;color:#c8c8c8;letter-spacing:0.7px;left:890.8px;">NOISE</div>
<div class="ab" style="left:994px;top:16px;width:128px;height:18px;background:#383838;border:1px solid;border-color:#f0f0f0 #909090 #909090 #f0f0f0"></div>
<div class="ab" style="top:19.22px;font-size:12.5px;line-height:12.5px;font-weight:bold;color:#fff;letter-spacing:1.2px;left:998.7px;">Bng 149°</div>
<div class="ab" style="top:19.22px;font-size:12.5px;line-height:12.5px;font-weight:bold;color:#00e000;letter-spacing:1.5px;left:1076.6px;">141mi</div>
<div class="ab" style="left:821px;top:64px;width:82px;height:16px;background:#5a5a5a;border:1px solid;border-color:#f0f0f0 #909090 #909090 #f0f0f0"></div>
<div class="ab" style="left:821px;top:66.54px;width:82px;text-align:center;font-size:12px;line-height:12px;color:#e0e0e0;letter-spacing:0.55px">Strikes/min</div>
<div class="ab" style="left:931px;top:64px;width:82px;height:16px;background:#5a5a5a;border:1px solid;border-color:#f0f0f0 #909090 #909090 #f0f0f0"></div>
<div class="ab" style="left:931px;top:66.54px;width:82px;text-align:center;font-size:12px;line-height:12px;color:#e0e0e0;letter-spacing:0.55px">Close/min</div>
<div class="ab" style="left:1041px;top:64px;width:82px;height:16px;background:#5a5a5a;border:1px solid;border-color:#f0f0f0 #909090 #909090 #f0f0f0"></div>
<div class="ab" style="left:1041px;top:66.54px;width:82px;text-align:center;font-size:12px;line-height:12px;color:#e0e0e0;letter-spacing:0.55px">Noises/min</div>
<div class="ab" style="top:86.91px;font-size:30px;line-height:30px;font-weight:bold;color:#fff;right:235.5px;transform:scaleX(1.08);transform-origin:right;">0</div>
<div class="ab" style="top:86.91px;font-size:30px;line-height:30px;font-weight:bold;color:#fff;right:125px;transform:scaleX(1.08);transform-origin:right;">0</div>
<div class="ab" style="top:86.91px;font-size:30px;line-height:30px;font-weight:bold;color:#b0b0b0;right:15px;transform:scaleX(1.08);transform-origin:right;">0</div>
<div class="ab" style="top:132.00px;font-size:13px;line-height:13px;font-weight:normal;color:#fff;letter-spacing:0.4px;right:235.5px;">Total Strikes</div>
<div class="ab" style="top:151.14px;font-size:12px;line-height:12px;font-weight:normal;color:#fff;right:235.5px;">1</div>
<div class="ab" style="top:132.00px;font-size:13px;line-height:13px;font-weight:normal;color:#fff;letter-spacing:0.4px;right:125px;">Total Close</div>
<div class="ab" style="top:151.14px;font-size:12px;line-height:12px;font-weight:normal;color:#fff;right:125px;">0</div>
<div class="ab" style="top:132.00px;font-size:13px;line-height:13px;font-weight:normal;color:#fff;letter-spacing:0.4px;right:15px;">Total Noises</div>
<div class="ab" style="top:151.14px;font-size:12px;line-height:12px;font-weight:normal;color:#fff;right:15px;">0</div>
<div class="ab" style="top:203.80px;font-size:13px;line-height:13px;font-weight:normal;color:#c0c0c0;letter-spacing:0.6px;left:821.2px;">Lightning type distribution</div>
<div class="ab" style="left:821px;top:217px;width:303px;height:1px;background:#909090"></div>
<div class="ab" style="top:225.60px;font-size:13px;line-height:13px;font-weight:bold;color:#fff;left:821.2px;">Cloud-ground</div>
<div class="ab" style="top:225.60px;font-size:13px;line-height:13px;font-weight:bold;color:#fff;left:912.5px;">+</div>
<div class="ab" style="left:925px;top:227px;width:51px;height:11px;border:1px solid #a0a0a0;border-radius:2px"></div>
<div class="ab" style="top:225.60px;font-size:13px;line-height:13px;font-weight:bold;color:#fff;letter-spacing:1.1px;left:979.3px;">0%</div>
<div class="ab" style="left:1016px;top:232.1px;width:5px;height:2px;background:#fff"></div>
<div class="ab" style="left:1028px;top:227px;width:51px;height:11px;border:1px solid #a0a0a0;border-radius:2px"></div>
<div class="ab" style="top:225.60px;font-size:13px;line-height:13px;font-weight:bold;color:#fff;letter-spacing:1.1px;left:1082.5px;">0%</div>
<div class="ab" style="top:279.80px;font-size:13px;line-height:13px;font-weight:bold;color:#fff;left:821.2px;">Intracloud</div>
<div class="ab" style="top:279.80px;font-size:13px;line-height:13px;font-weight:bold;color:#fff;left:912.5px;">+</div>
<div class="ab" style="left:925px;top:281px;width:51px;height:11px;border:1px solid #a0a0a0;border-radius:2px"></div>
<div class="ab" style="top:279.80px;font-size:13px;line-height:13px;font-weight:bold;color:#fff;letter-spacing:1.1px;left:979.3px;">0%</div>
<div class="ab" style="left:1016px;top:286.3px;width:5px;height:2px;background:#fff"></div>
<div class="ab" style="left:1028px;top:281px;width:51px;height:11px;border:1px solid #a0a0a0;border-radius:2px;background:#00e000"></div>
<div class="ab" style="top:279.80px;font-size:13px;line-height:13px;font-weight:bold;color:#fff;letter-spacing:1.1px;left:1082.5px;">100%</div>
<div class="ab" style="top:250.00px;font-size:13px;line-height:13px;font-weight:bold;color:#c0c0c0;left:821.2px;">Count</div>
<div class="ab" style="top:250.00px;font-size:13px;line-height:13px;font-weight:bold;color:#fff;left:924.8px;">0</div>
<div class="ab" style="top:250.00px;font-size:13px;line-height:13px;font-weight:bold;color:#fff;left:1028.3px;">0</div>
<div class="ab" style="top:304.00px;font-size:13px;line-height:13px;font-weight:bold;color:#c0c0c0;left:821.2px;">Count</div>
<div class="ab" style="top:304.00px;font-size:13px;line-height:13px;font-weight:bold;color:#fff;left:924.8px;">0</div>
<div class="ab" style="top:304.00px;font-size:13px;line-height:13px;font-weight:bold;color:#fff;left:1028.3px;">1</div>
<div class="ab" style="top:339.69px;font-size:17.5px;line-height:17.5px;font-weight:bold;color:#00e000;letter-spacing:1.72px;left:821.2px;">05/10/2025 03:19:44</div>
<div class="ab" style="left:821px;top:357px;width:302px;height:1px;background:#909090"></div>
<div class="ab" style="top:376.70px;font-size:13px;line-height:13px;font-weight:normal;color:#fff;letter-spacing:0.4px;left:821.2px;">Squelch</div>
<div class="ab" style="top:376.70px;font-size:13px;line-height:13px;font-weight:normal;color:#fff;letter-spacing:0.4px;left:909.9px;">7</div>
<div class="ab" style="top:376.70px;font-size:13px;line-height:13px;font-weight:normal;color:#fff;letter-spacing:0.4px;left:981.1px;">Upload</div>
<div class="ab" style="top:376.70px;font-size:13px;line-height:13px;font-weight:normal;color:#00e000;letter-spacing:0.4px;left:1061.3px;">Enabled</div>
<div class="ab" style="top:396.50px;font-size:13px;line-height:13px;font-weight:normal;color:#fff;letter-spacing:0.4px;left:821.2px;">Persistence</div>
<div class="ab" style="top:396.50px;font-size:13px;line-height:13px;font-weight:normal;color:#fff;letter-spacing:0.4px;left:909.9px;">30 min</div>
<div class="ab" style="top:396.50px;font-size:13px;line-height:13px;font-weight:normal;color:#fff;letter-spacing:0.4px;left:981.1px;">Capture</div>
<div class="ab" style="top:396.50px;font-size:13px;line-height:13px;font-weight:normal;color:#00e000;letter-spacing:0.4px;left:1061.3px;">Enabled</div>
<div class="ab" style="top:416.60px;font-size:13px;line-height:13px;font-weight:normal;color:#fff;letter-spacing:0.4px;left:821.2px;">Range</div>
<div class="ab" style="top:416.60px;font-size:13px;line-height:13px;font-weight:normal;color:#fff;letter-spacing:0.4px;left:909.9px;">188 mi</div>
<div class="ab" style="top:416.60px;font-size:13px;line-height:13px;font-weight:normal;color:#fff;letter-spacing:0.4px;left:981.1px;">Receiver</div>
<div class="ab" style="top:416.60px;font-size:13px;line-height:13px;font-weight:normal;color:#00e000;letter-spacing:0.4px;left:1061.3px;">Enabled</div>
<div class="ab" style="top:463.80px;font-size:13px;line-height:13px;font-weight:normal;color:#c0c0c0;letter-spacing:0.4px;left:821.2px;">Uptime</div>
<div class="ab" style="top:463.80px;font-size:13px;line-height:13px;font-weight:normal;color:#fff;letter-spacing:0.4px;left:909.2px;">200:56</div>
<div class="ab" style="top:463.80px;font-size:13px;line-height:13px;font-weight:normal;color:#c0c0c0;letter-spacing:0.4px;left:981px;">Peak time</div>
<div class="ab" style="top:463.80px;font-size:13px;line-height:13px;font-weight:normal;color:#c0c0c0;letter-spacing:0.4px;left:1061px;">Plot</div>
<div class="ab" style="top:486.30px;font-size:13px;line-height:13px;font-weight:normal;color:#c0c0c0;letter-spacing:0.4px;left:821.2px;">Peak rate</div>
<div class="ab" style="top:486.30px;font-size:13px;line-height:13px;font-weight:normal;color:#fff;letter-spacing:0.4px;left:909.2px;">1/min</div>
<div class="ab" style="top:486.30px;font-size:13px;line-height:13px;font-weight:normal;color:#fff;letter-spacing:0.4px;left:981px;">02:26</div>
<div class="ab" style="top:486.30px;font-size:13px;line-height:13px;font-weight:normal;color:#fff;letter-spacing:0.4px;left:1061px;">Strike</div>
<div class="ab" style="top:516.50px;font-size:13px;line-height:13px;font-weight:normal;color:#c0c0c0;letter-spacing:0.5px;left:822px;">Trend graph</div>
<div class="ab" style="top:516.50px;font-size:13px;line-height:13px;font-weight:normal;color:#fff;letter-spacing:0.4px;left:908.4px;">60 min</div>
<svg class="ab" style="left:0;top:0" width="1138" height="812" shape-rendering="crispEdges"><line x1="1088.5" y1="542" x2="1088.5" y2="778" stroke="#c8c8c8"/><line x1="822" y1="777.5" x2="1089" y2="777.5" stroke="#c8c8c8"/><line x1="1084" y1="542.5" x2="1089" y2="542.5" stroke="#c8c8c8"/><line x1="1086" y1="582.5" x2="1090" y2="582.5" stroke="#c8c8c8"/><line x1="1084" y1="621.5" x2="1089" y2="621.5" stroke="#c8c8c8"/><line x1="1086" y1="660.5" x2="1090" y2="660.5" stroke="#c8c8c8"/><line x1="1084" y1="700.5" x2="1089" y2="700.5" stroke="#c8c8c8"/><line x1="1086" y1="739.5" x2="1090" y2="739.5" stroke="#c8c8c8"/><line x1="822.5" y1="775" x2="822.5" y2="780" stroke="#c8c8c8"/><line x1="867.5" y1="775" x2="867.5" y2="780" stroke="#c8c8c8"/><line x1="911.5" y1="775" x2="911.5" y2="780" stroke="#c8c8c8"/><line x1="955.5" y1="775" x2="955.5" y2="780" stroke="#c8c8c8"/><line x1="1000.5" y1="775" x2="1000.5" y2="780" stroke="#c8c8c8"/><line x1="1044.5" y1="775" x2="1044.5" y2="780" stroke="#c8c8c8"/><line x1="1088.5" y1="775" x2="1088.5" y2="780" stroke="#c8c8c8"/><polyline points="843.5,777 845,770 847.5,770 849.5,777" fill="none" stroke="#fff"/></svg>
<div class="ab" style="top:536.67px;font-size:12.2px;line-height:12.2px;font-weight:normal;color:#c8c8c8;letter-spacing:0.2px;left:1092.3px;">30</div>
<div class="ab" style="top:615.17px;font-size:12.2px;line-height:12.2px;font-weight:normal;color:#c8c8c8;letter-spacing:0.2px;left:1092.3px;">20</div>
<div class="ab" style="top:693.67px;font-size:12.2px;line-height:12.2px;font-weight:normal;color:#c8c8c8;letter-spacing:0.2px;left:1092.3px;">10</div>
<div class="ab" style="top:782.87px;font-size:12.2px;line-height:12.2px;font-weight:normal;color:#c8c8c8;letter-spacing:0.2px;left:820.3px;">60</div>
<div class="ab" style="top:782.87px;font-size:12.2px;line-height:12.2px;font-weight:normal;color:#c8c8c8;letter-spacing:0.2px;left:864.65px;">50</div>
<div class="ab" style="top:782.87px;font-size:12.2px;line-height:12.2px;font-weight:normal;color:#c8c8c8;letter-spacing:0.2px;left:909.0px;">40</div>
<div class="ab" style="top:782.87px;font-size:12.2px;line-height:12.2px;font-weight:normal;color:#c8c8c8;letter-spacing:0.2px;left:953.35px;">30</div>
<div class="ab" style="top:782.87px;font-size:12.2px;line-height:12.2px;font-weight:normal;color:#c8c8c8;letter-spacing:0.2px;left:997.7px;">20</div>
<div class="ab" style="top:782.87px;font-size:12.2px;line-height:12.2px;font-weight:normal;color:#c8c8c8;letter-spacing:0.2px;left:1042.0500000000002px;">10</div>
<div class="ab" style="top:782.87px;font-size:12.2px;line-height:12.2px;font-weight:normal;color:#c8c8c8;letter-spacing:0.2px;left:1087.3px;">0</div>
<div class="ab" style="top:782.87px;font-size:12.2px;line-height:12.2px;font-weight:normal;color:#c8c8c8;letter-spacing:0.2px;left:1100.3px;">min</div>
<div class="ab" style="left:8px;top:758px;width:245px;height:46px;background:#000"></div>
<div class="ab" style="left:9px;top:759px;width:244px;height:44px;border:1px solid #a8a8a8"></div>
<div class="ab" style="top:763.58px;font-size:9px;line-height:9px;font-weight:normal;color:#e8e8e8;left:13.1px;">Symbols</div>
<div class="ab" style="top:763.58px;font-size:9px;line-height:9px;font-weight:normal;color:#e8e8e8;letter-spacing:0.3px;left:52.8px;">-CG</div>
<div class="ab" style="top:763.58px;font-size:9px;line-height:9px;font-weight:normal;color:#e8e8e8;letter-spacing:0.3px;left:78px;">-IC</div>
<div class="ab" style="top:763.58px;font-size:9px;line-height:9px;font-weight:normal;color:#e8e8e8;letter-spacing:0.3px;left:99.1px;">+CG</div>
<div class="ab" style="top:763.58px;font-size:9px;line-height:9px;font-weight:normal;color:#e8e8e8;letter-spacing:0.3px;left:123.6px;">+IC</div>
<div class="ab" style="top:763.58px;font-size:9px;line-height:9px;font-weight:normal;color:#e8e8e8;letter-spacing:0.05px;left:153.2px;">Strike age color codes</div>
<div class="ab" style="top:776.18px;font-size:9px;line-height:9px;font-weight:normal;color:#e8e8e8;left:13.1px;">Recent</div>
<div class="ab" style="top:788.98px;font-size:9px;line-height:9px;font-weight:normal;color:#e8e8e8;left:13.1px;">Old</div>
<div class="ab" style="top:776.68px;font-size:9px;line-height:9px;font-weight:normal;color:#e8d800;letter-spacing:0.3px;left:153.5px;">30+</div>
<div class="ab" style="top:776.68px;font-size:9px;line-height:9px;font-weight:normal;color:#e8c000;letter-spacing:0.3px;left:188.1px;">60+</div>
<div class="ab" style="top:776.68px;font-size:9px;line-height:9px;font-weight:normal;color:#f0a800;letter-spacing:0.3px;left:223.4px;">90+</div>
<div class="ab" style="top:789.48px;font-size:9px;line-height:9px;font-weight:normal;color:#e89000;letter-spacing:0.3px;left:153.5px;">120+</div>
<div class="ab" style="top:789.48px;font-size:9px;line-height:9px;font-weight:normal;color:#e86800;letter-spacing:0.3px;left:188.7px;">150+</div>
<div class="ab" style="top:789.48px;font-size:9px;line-height:9px;font-weight:normal;color:#e84000;letter-spacing:0.3px;left:223.4px;">180+</div>
<svg class="ab" style="left:0;top:0" width="260" height="812"><rect x="56" y="776" width="9" height="9" fill="#00f0f0"/><rect x="57" y="780" width="7" height="1" fill="#000"/><circle cx="85.5" cy="780.5" r="5" fill="none" stroke="#00e040"/><rect x="82" y="780" width="7" height="1" fill="#00e040"/><circle cx="110.5" cy="780.5" r="5.5" fill="#f00000"/><rect x="107" y="780" width="7" height="1.2" fill="#000"/><rect x="110" y="777" width="1.2" height="7" fill="#000"/><rect x="131.5" y="776.5" width="8" height="8" fill="none" stroke="#00e040"/><rect x="133" y="780" width="5" height="1" fill="#00e040"/><rect x="56.5" y="789.5" width="8" height="8" fill="none" stroke="#f08000"/><rect x="58" y="793" width="5" height="1" fill="#f08000"/><rect x="81.5" y="789.5" width="8" height="8" fill="none" stroke="#f08000"/><rect x="83" y="793" width="5" height="1" fill="#f08000"/><rect x="106.5" y="789.5" width="8" height="8" fill="none" stroke="#f08000"/><rect x="108" y="793" width="5" height="1" fill="#f08000"/><rect x="131.5" y="789.5" width="8" height="8" fill="none" stroke="#f08000"/><rect x="133" y="793" width="5" height="1" fill="#f08000"/></svg>
<div class="ab" style="left:603px;top:792px;width:203px;height:14px;background:#000"></div>
<div class="ab" style="top:793.53px;font-size:10px;line-height:10px;font-weight:normal;color:#f0f0f0;letter-spacing:-0.33px;left:607px;">©2025 Delerius Weather &amp; Astrogenic Systems</div>
</body></html>
